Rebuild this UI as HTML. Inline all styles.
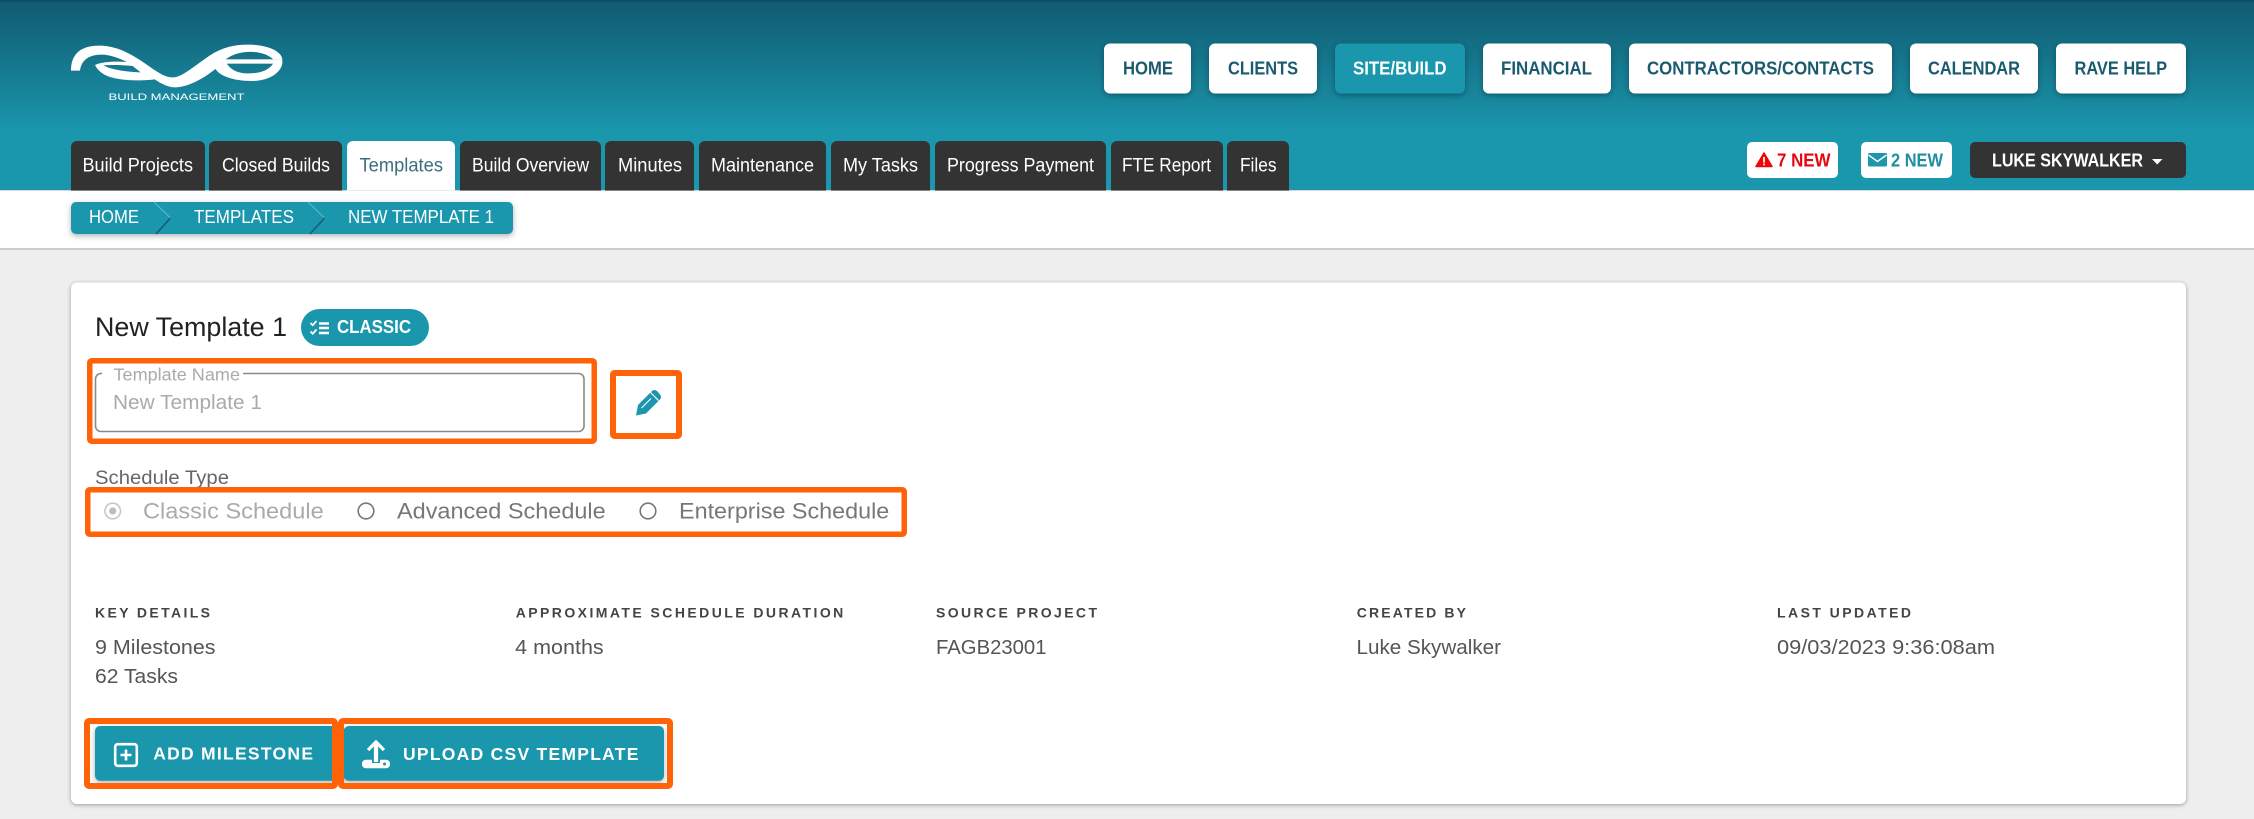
<!DOCTYPE html>
<html lang="en">
<head>
<meta charset="utf-8">
<title>New Template 1</title>
<style>
html,body{margin:0;padding:0;width:2254px;height:819px;overflow:hidden;background:#eee}
svg{display:block;position:absolute;left:0;top:0}
text{font-family:"Liberation Sans",Arial,sans-serif}
.nav{font-size:18.5px;font-weight:bold;fill:#1a5a6e}
.tab{font-size:19px;fill:#fff}
.bc{font-size:18.5px;fill:#fff}
.lab{font-size:14px;font-weight:bold;fill:#444}
.val{font-size:20px;fill:#555}
.rad{font-size:22.5px;fill:#777}
.btn{font-size:17.5px;font-weight:bold;fill:#fff}
.sh{filter:drop-shadow(0 2px 3px rgba(0,0,0,.3))}
.or{fill:none;stroke:#ff6207}
</style>
</head>
<body>
<svg width="2254" height="819" viewBox="0 0 2254 819" xmlns="http://www.w3.org/2000/svg">
<defs>
<linearGradient id="hd" x1="0" y1="0" x2="0" y2="1">
<stop offset="0" stop-color="#115a70"/>
<stop offset=".7" stop-color="#1a97ad"/>
<stop offset="1" stop-color="#1a97ad"/>
</linearGradient>
</defs>

<!-- backgrounds -->
<rect x="0" y="0" width="2254" height="819" fill="#eeeeee"/>
<rect x="0" y="0" width="2254" height="190" fill="url(#hd)"/>
<rect x="0" y="0" width="2254" height="1.5" fill="#0d4c60"/>
<rect x="0" y="190" width="2254" height="58" fill="#fff"/>
<rect x="0" y="190" width="2254" height="1" fill="#cfd8da"/>
<rect x="0" y="248" width="2254" height="2" fill="#cbcbcb"/>

<!-- logo -->
<g transform="translate(60 30) scale(.3333)" fill="#fff">
<path d="M33 122C33 72 62 47 118 47C178 47 226 80 272 112C300 132 322 144 342 142C368 140 408 104 450 76C490 50 530 43 570 44C625 45 665 64 667 88L640 88C620 70 590 64 560 66C530 68 510 78 495 90L472 112C437 142 385 172 345 172C318 172 295 155 268 138C240 118 175 74 125 74C85 74 64 92 60 122Z"/>
<path d="M105 105C125 95 170 92 222 98L262 133L284 148C240 153 192 153 150 141C128 134 112 120 105 105ZM130 106C150 118 200 126 242 127L218 108C190 105 155 104 130 106Z" fill-rule="evenodd"/>
<rect x="490" y="88" width="177" height="13"/>
<path d="M466 116C478 138 520 153 575 153C625 153 662 130 667 100L640 100C625 122 600 130 565 130C530 130 512 118 500 100L490 92Z"/>
</g>
<text x="108.5" y="100" font-size="9" fill="#fff" textLength="136" lengthAdjust="spacingAndGlyphs">BUILD MANAGEMENT</text>

<!-- main nav -->
<g class="sh" fill="#fff">
<rect x="1104" y="43.5" width="87" height="50" rx="6"/>
<rect x="1209" y="43.5" width="108" height="50" rx="6"/>
<rect x="1335" y="43.5" width="130" height="50" rx="6" fill="#1a97ad"/>
<rect x="1483" y="43.5" width="128" height="50" rx="6"/>
<rect x="1629" y="43.5" width="263" height="50" rx="6"/>
<rect x="1910" y="43.5" width="128" height="50" rx="6"/>
<rect x="2056" y="43.5" width="130" height="50" rx="6"/>
</g>
<text class="nav" x="1123" y="74.5" textLength="50" lengthAdjust="spacingAndGlyphs">HOME</text>
<text class="nav" x="1228" y="74.5" textLength="70" lengthAdjust="spacingAndGlyphs">CLIENTS</text>
<text class="nav" x="1353" y="74.5" textLength="93.5" lengthAdjust="spacingAndGlyphs" style="fill:#fff">SITE/BUILD</text>
<text class="nav" x="1501" y="74.5" textLength="91" lengthAdjust="spacingAndGlyphs">FINANCIAL</text>
<text class="nav" x="1647" y="74.5" textLength="227" lengthAdjust="spacingAndGlyphs">CONTRACTORS/CONTACTS</text>
<text class="nav" x="1928" y="74.5" textLength="92" lengthAdjust="spacingAndGlyphs">CALENDAR</text>
<text class="nav" x="2074.5" y="74.5" textLength="92.5" lengthAdjust="spacingAndGlyphs">RAVE HELP</text>

<!-- tabs -->
<g fill="#333">
<path d="M71 190.5V147a6 6 0 0 1 6-6H199a6 6 0 0 1 6 6V190.5Z"/>
<path d="M209 190.5V147a6 6 0 0 1 6-6H336a6 6 0 0 1 6 6V190.5Z"/>
<path d="M347 190.5V147a6 6 0 0 1 6-6H449a6 6 0 0 1 6 6V190.5Z" fill="#fff"/>
<path d="M460 190.5V147a6 6 0 0 1 6-6H595a6 6 0 0 1 6 6V190.5Z"/>
<path d="M605 190.5V147a6 6 0 0 1 6-6H688a6 6 0 0 1 6 6V190.5Z"/>
<path d="M699 190.5V147a6 6 0 0 1 6-6H820a6 6 0 0 1 6 6V190.5Z"/>
<path d="M831 190.5V147a6 6 0 0 1 6-6H924a6 6 0 0 1 6 6V190.5Z"/>
<path d="M935 190.5V147a6 6 0 0 1 6-6H1100a6 6 0 0 1 6 6V190.5Z"/>
<path d="M1111 190.5V147a6 6 0 0 1 6-6H1217a6 6 0 0 1 6 6V190.5Z"/>
<path d="M1227 190.5V147a6 6 0 0 1 6-6H1283a6 6 0 0 1 6 6V190.5Z"/>
</g>
<text class="tab" x="82.5" y="171.5" textLength="110.5" lengthAdjust="spacingAndGlyphs">Build Projects</text>
<text class="tab" x="222" y="171.5" textLength="108" lengthAdjust="spacingAndGlyphs">Closed Builds</text>
<text class="tab" x="359.5" y="171.5" textLength="83.5" lengthAdjust="spacingAndGlyphs" style="fill:#3d6d7c">Templates</text>
<text class="tab" x="472" y="171.5" textLength="117" lengthAdjust="spacingAndGlyphs">Build Overview</text>
<text class="tab" x="618" y="171.5" textLength="64" lengthAdjust="spacingAndGlyphs">Minutes</text>
<text class="tab" x="711" y="171.5" textLength="103" lengthAdjust="spacingAndGlyphs">Maintenance</text>
<text class="tab" x="843" y="171.5" textLength="75" lengthAdjust="spacingAndGlyphs">My Tasks</text>
<text class="tab" x="947" y="171.5" textLength="147" lengthAdjust="spacingAndGlyphs">Progress Payment</text>
<text class="tab" x="1122" y="171.5" textLength="89" lengthAdjust="spacingAndGlyphs">FTE Report</text>
<text class="tab" x="1240" y="171.5" textLength="36.5" lengthAdjust="spacingAndGlyphs">Files</text>

<!-- alerts and user -->
<rect x="1747" y="142" width="91" height="36" rx="5" fill="#fff"/>
<path d="M1764 153L1772 166.5H1756Z" fill="#f00606" stroke="#f00606" stroke-width="1.5" stroke-linejoin="round"/>
<rect x="1763.2" y="157" width="1.7" height="5.5" fill="#fff"/>
<rect x="1763.2" y="163.5" width="1.7" height="1.8" fill="#fff"/>
<text x="1777" y="166.5" font-size="18.5" font-weight="bold" fill="#e8060c" textLength="53.5" lengthAdjust="spacingAndGlyphs">7 NEW</text>
<rect x="1861" y="142" width="91" height="36" rx="5" fill="#fff"/>
<rect x="1868" y="153" width="19" height="13.5" rx="1.5" fill="#1f96ab"/>
<path d="M1868.5 155L1877.5 161.5L1886.5 155" fill="none" stroke="#fff" stroke-width="1.4"/>
<text x="1891" y="166.5" font-size="18.5" font-weight="bold" fill="#1f8ea3" textLength="52" lengthAdjust="spacingAndGlyphs">2 NEW</text>
<rect x="1970" y="142" width="216" height="36" rx="5" fill="#333"/>
<text x="1992" y="166.5" font-size="18.5" font-weight="bold" fill="#fff" textLength="151" lengthAdjust="spacingAndGlyphs">LUKE SKYWALKER</text>
<path d="M2152 159H2162.5L2157.2 164.5Z" fill="#fff"/>

<!-- breadcrumb -->
<rect class="sh" x="71" y="202" width="442" height="32" rx="5" fill="#1a97ad"/>
<path d="M154 202L170.5 218" stroke="#5db8c7" stroke-width="1.1" fill="none"/>
<path d="M170.5 218L156 234" stroke="#135c6c" stroke-width="1.4" fill="none"/>
<path d="M308 202L324.5 218" stroke="#5db8c7" stroke-width="1.1" fill="none"/>
<path d="M324.5 218L310 234" stroke="#135c6c" stroke-width="1.4" fill="none"/>
<text class="bc" x="89" y="223" textLength="50" lengthAdjust="spacingAndGlyphs">HOME</text>
<text class="bc" x="194" y="223" textLength="100" lengthAdjust="spacingAndGlyphs">TEMPLATES</text>
<text class="bc" x="348" y="223" textLength="146" lengthAdjust="spacingAndGlyphs">NEW TEMPLATE 1</text>

<!-- card -->
<rect x="71" y="282.5" width="2115" height="521.5" rx="6" fill="#fff" style="filter:drop-shadow(0 1px 2px rgba(0,0,0,.35))"/>

<text x="95" y="336" font-size="26.5" fill="#222" textLength="192" lengthAdjust="spacingAndGlyphs">New Template 1</text>
<rect x="301" y="309" width="128" height="37" rx="18.5" fill="#1a97ad"/>
<g fill="none" stroke="#fff" stroke-width="2.4">
<path d="M319 323.5H329M319 328H329M319 333H329"/>
<path d="M310.5 323L312.7 325.2L316.5 321M310.5 331.5L312.7 333.7L316.5 329.5" stroke-width="1.8"/>
</g>
<text x="337" y="333" font-size="18" font-weight="bold" fill="#fff" textLength="74" lengthAdjust="spacingAndGlyphs">CLASSIC</text>

<!-- template name input -->
<path d="M102 373.5H101A5.5 5.5 0 0 0 95.5 379V426A5.5 5.5 0 0 0 101 431.5H578.5A5.5 5.5 0 0 0 584 426V379A5.5 5.5 0 0 0 578.5 373.5H243" fill="none" stroke="#8a8a8a" stroke-width="1.6"/>
<text x="113.5" y="380.7" font-size="17.5" fill="#aaa" textLength="126.5" lengthAdjust="spacingAndGlyphs">Template Name</text>
<text x="113" y="409" font-size="20.5" fill="#aaa" textLength="149" lengthAdjust="spacingAndGlyphs">New Template 1</text>

<!-- pencil -->
<path fill="#1a97ad" d="M636 415.5L638 405L652 391Q654.5 389 657 391L660 394.5Q662 397 660 399.5L646 413.5Z"/>
<path d="M650.5 392.5L658.5 400.5" stroke="#fff" stroke-width="1.2" fill="none"/>
<path d="M641.5 408L651 398.5" stroke="#fff" stroke-width="1.1" fill="none"/>

<!-- schedule type -->
<text x="95" y="484" font-size="19" fill="#666" textLength="134" lengthAdjust="spacingAndGlyphs">Schedule Type</text>
<circle cx="112.7" cy="511" r="7.8" fill="none" stroke="#c8c8c8" stroke-width="1.6"/>
<circle cx="112.7" cy="511" r="3.6" fill="#bdbdbd"/>
<text class="rad" x="143" y="518.3" textLength="180.7" lengthAdjust="spacingAndGlyphs" style="fill:#aaa">Classic Schedule</text>
<circle cx="366" cy="511" r="7.8" fill="none" stroke="#777" stroke-width="1.6"/>
<text class="rad" x="397" y="518.3" textLength="208.7" lengthAdjust="spacingAndGlyphs">Advanced Schedule</text>
<circle cx="648" cy="511" r="7.8" fill="none" stroke="#777" stroke-width="1.6"/>
<text class="rad" x="679" y="518.3" textLength="210.3" lengthAdjust="spacingAndGlyphs">Enterprise Schedule</text>

<!-- details -->
<text class="lab" x="95" y="617.3" textLength="115" lengthAdjust="spacing">KEY DETAILS</text>
<text class="lab" x="515.7" y="617.3" textLength="327.6" lengthAdjust="spacing">APPROXIMATE SCHEDULE DURATION</text>
<text class="lab" x="936" y="617.3" textLength="161" lengthAdjust="spacing">SOURCE PROJECT</text>
<text class="lab" x="1356.7" y="617.3" textLength="109.3" lengthAdjust="spacing">CREATED BY</text>
<text class="lab" x="1777" y="617.3" textLength="134" lengthAdjust="spacing">LAST UPDATED</text>
<text class="val" x="95" y="654" textLength="120.5" lengthAdjust="spacingAndGlyphs">9 Milestones</text>
<text class="val" x="95" y="683" textLength="83" lengthAdjust="spacingAndGlyphs">62 Tasks</text>
<text class="val" x="515.2" y="654" textLength="88.5" lengthAdjust="spacingAndGlyphs">4 months</text>
<text class="val" x="936" y="654" textLength="110.5" lengthAdjust="spacingAndGlyphs">FAGB23001</text>
<text class="val" x="1356.5" y="654" textLength="144.5" lengthAdjust="spacingAndGlyphs">Luke Skywalker</text>
<text class="val" x="1777" y="654" textLength="218" lengthAdjust="spacingAndGlyphs">09/03/2023 9:36:08am</text>

<!-- buttons -->
<rect class="sh" x="95" y="726" width="250" height="54.7" rx="5" fill="#1a97ad"/>
<rect class="sh" x="344" y="726" width="320" height="54.7" rx="5" fill="#1a97ad"/>
<rect x="115.2" y="744.2" width="21.6" height="21.6" rx="2.5" fill="none" stroke="#fff" stroke-width="2.6"/>
<path d="M126 749.5V760.5M120.5 755H131.5" stroke="#fff" stroke-width="2.6" fill="none"/>
<text class="btn" x="153.2" y="759.5" textLength="159.8" lengthAdjust="spacing">ADD MILESTONE</text>
<path d="M376 743V762" stroke="#fff" stroke-width="4.2" fill="none"/>
<path d="M368 750L376 742L384 750" stroke="#fff" stroke-width="3.2" fill="none"/>
<path d="M362 763.5A3.8 3.8 0 0 1 365.8 759.7H372V763H380V759.7H386.2A3.8 3.8 0 0 1 390 763.5V764.5A3.8 3.8 0 0 1 386.2 768.3H365.8A3.8 3.8 0 0 1 362 764.5Z" fill="#fff"/>
<rect x="383" y="762.5" width="3" height="3" rx="1.5" fill="#1a97ad"/>
<text class="btn" x="403" y="760" textLength="235.4" lengthAdjust="spacing">UPLOAD CSV TEMPLATE</text>

<!-- orange highlight boxes -->
<rect class="or" stroke-width="5.5" x="89.75" y="360.75" width="504.5" height="80.5" rx="2"/>
<rect class="or" stroke-width="6" x="613" y="373" width="66" height="63" rx="1.5"/>
<rect class="or" stroke-width="5.5" x="87.75" y="489.75" width="816.5" height="44.5" rx="2"/>
<rect class="or" stroke-width="6" x="87" y="721" width="248" height="65" rx="2"/>
<rect class="or" stroke-width="6" x="341" y="721" width="329" height="65" rx="2"/>
</svg>
</body>
</html>
